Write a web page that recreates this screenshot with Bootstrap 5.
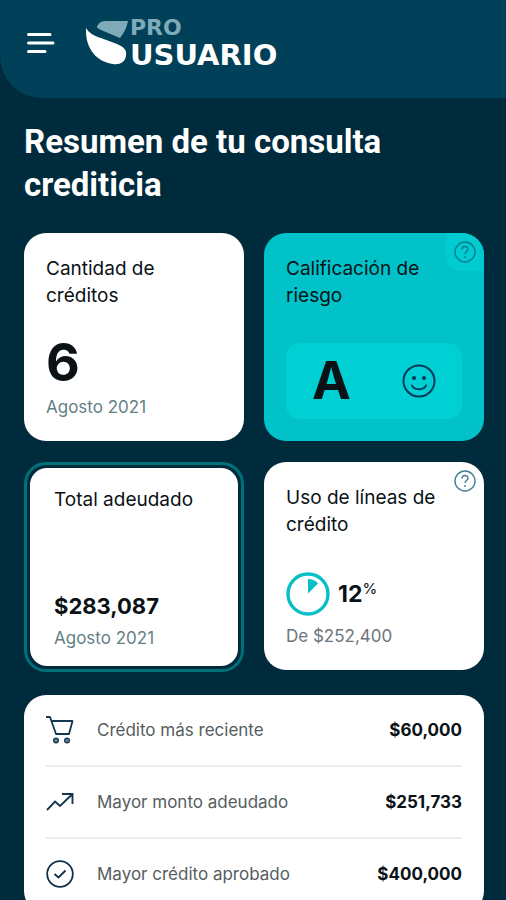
<!DOCTYPE html>
<html lang="es">
<head>
<meta charset="utf-8">
<meta name="viewport" content="width=device-width, initial-scale=1">
<title>Pro Usuario</title>
<link href="https://cdn.jsdelivr.net/npm/bootstrap@5.3.0/dist/css/bootstrap.min.css" rel="stylesheet">
<style>
:root{--navy:#002b3d;--bar:#004159;--teal:#00c2c8;--ink:#0b1216}
body{background:var(--navy);color:var(--ink);font-family:Inter,"Noto Sans",sans-serif}
svg{display:block;flex:none}
.topbar{background:var(--bar);min-height:98px;border-bottom-left-radius:42px;padding:0 26px 12px}
.brand-text{font:700 29px/30px "DejaVu Sans",sans-serif;color:#fff}
.brand-text .pro{font-size:22px;line-height:24px;color:#7eabb7}
.page-main{padding:22px 22px 0 24px}
.page-title{font:700 33px/43px Roboto,sans-serif;color:#fff;margin:0 0 27px}
.tiles{display:grid;grid-template-columns:1fr 1fr;align-items:start;gap:21px 20px}
.tile{background:#fff;border-radius:22px;min-height:208px;padding:22px;position:relative}
.tile h2{font-size:19px;line-height:27px;font-weight:400;margin:0}
.tile-risk{background:var(--teal)}
.tile-ring{min-height:210px;border:3px solid #007079;background:var(--navy);padding:3px}
.tile-ring>div{background:#fff;border-radius:17px;padding:18px 24px 16px}
.big{font-size:52px;line-height:48px;font-weight:700}
.note{font-size:17px;line-height:24px;color:#648085}
.amount{font-size:22px;line-height:32px;font-weight:700}
.pct{font-size:23px;line-height:28px;font-weight:700}
.pct sup{font-size:15px;font-weight:400;top:-8px}
.help{position:absolute;top:0;right:0;border:0;background:none;color:#437f91;padding:8px;border-radius:0 22px 0 14px}
.tile-risk .help{background:#00cbd0;color:#087c8b}
.grade{background:#00d0d4;border-radius:14px;height:76px;padding:0 26px}
.summary{background:#fff;border-radius:22px;padding:0 22px 4px;margin-top:23px}
.summary li{min-height:70px;font-size:17px;line-height:24px;color:#555d61}
.summary li+li{border-top:2px solid #ebeff0;min-height:72px}
.summary strong{color:var(--ink)}
.ico{gap:23px}
</style>
</head>
<body>
<header class="topbar d-flex align-items-center">
  <button class="btn p-0 border-0" type="button" aria-label="Menú">
    <svg width="30" height="24" fill="none" stroke="#fff" stroke-width="3" stroke-linecap="round"><path d="M2.500 3.500H24M2.500 12H27M2.500 20.500H19"/></svg>
  </button>
  <a class="d-flex align-items-center text-decoration-none ms-4 ps-1" href="#" aria-label="Pro Usuario">
    <svg width="46" height="46" viewBox="0 0 46 46"><path fill="#7eabb7" d="M14 5C16 1 20 1 24 1H44C43 7 40 13 36 18L17 10C13 8 12 7 14 5Z"/><path fill="#fff" d="M2 8C5 13 10 16 17 18L33 24C40 27 43 30 42 36C41 42 36 45 29 44C14 42 1 30 2 8Z"/></svg>
    <span class="brand-text d-flex flex-column"><span class="pro">PRO</span><span>USUARIO</span></span>
  </a>
</header>
<main class="page-main">
  <h1 class="page-title">Resumen de tu consulta crediticia</h1>
  <div class="tiles">
    <section class="tile d-flex flex-column">
      <h2>Cantidad de<br>créditos</h2>
      <div class="mt-auto big">6</div>
      <div class="note mt-2">Agosto 2021</div>
    </section>
    <section class="tile tile-risk d-flex flex-column">
      <button class="help" type="button" aria-label="Ayuda sobre calificación"><svg width="22" height="22" fill="none" stroke="currentColor" stroke-width="1.4"><circle cx="11" cy="11" r="10"/><path d="M8 8.500C8 4.500 14 4.500 14 8.200C14 10.500 11 10.500 11 13M11 15V17"/></svg></button>
      <h2>Calificación de<br>riesgo</h2>
      <div class="grade mt-auto d-flex align-items-center justify-content-between">
        <span class="big">A</span>
        <svg width="34" height="34" fill="none" stroke="#04395a" stroke-width="2" stroke-linecap="round"><circle cx="17" cy="17" r="15.500"/><path d="M10 21.500C12 26.500 22 26.500 24 21.500"/><g fill="#04395a" stroke="none"><circle cx="12" cy="14" r="2"/><circle cx="22" cy="14" r="2"/></g></svg>
      </div>
    </section>
    <section class="tile tile-ring d-flex">
      <div class="d-flex flex-column flex-fill">
        <h2>Total adeudado</h2>
        <div class="amount mt-auto mb-1">$283,087</div>
        <div class="note">Agosto 2021</div>
      </div>
    </section>
    <section class="tile d-flex flex-column">
      <button class="help" type="button" aria-label="Ayuda sobre líneas de crédito"><svg width="22" height="22" fill="none" stroke="currentColor" stroke-width="1.4"><circle cx="11" cy="11" r="10"/><path d="M8 8.500C8 4.500 14 4.500 14 8.200C14 10.500 11 10.500 11 13M11 15V17"/></svg></button>
      <h2>Uso de líneas de<br>crédito</h2>
      <div class="d-flex align-items-center mt-auto">
        <svg width="44" height="44"><circle cx="22" cy="22" r="20" fill="none" stroke="#08bfc5" stroke-width="3.400"/><path fill="#08bfc5" d="M22 21.500V7C26 7 29 8 32 11.500Z"/></svg>
        <div class="pct ms-2">12<sup>%</sup></div>
      </div>
      <div class="note mt-2 text-secondary">De $252,400</div>
    </section>
  </div>
  <ul class="summary list-unstyled mb-0">
    <li class="d-flex align-items-center ico">
      <svg width="28" height="30" fill="none" stroke="#12384f" stroke-width="1.800" stroke-linejoin="round"><path d="M0 2H4L10 19H23L26.500 6H5.500"/><g fill="#647f8e" stroke-width="1.200"><circle cx="10" cy="25.500" r="2.400"/><circle cx="21" cy="25.500" r="2.400"/></g></svg>
      <span class="flex-fill">Crédito más reciente</span><strong>$60,000</strong>
    </li>
    <li class="d-flex align-items-center ico">
      <svg width="28" height="20" fill="none" stroke="#12384f" stroke-width="1.900"><path d="M1 18L9 9.500L14 14L26 2.500M16 2H26.500V12"/></svg>
      <span class="flex-fill">Mayor monto adeudado</span><strong>$251,733</strong>
    </li>
    <li class="d-flex align-items-center ico">
      <svg width="28" height="28" fill="none" stroke="#102f4b" stroke-width="1.800"><circle cx="14" cy="14" r="12.800"/><path d="M8.500 14L12.500 17.500L19.500 10.500"/></svg>
      <span class="flex-fill">Mayor crédito aprobado</span><strong>$400,000</strong>
    </li>
  </ul>
</main>
<script src="https://cdn.jsdelivr.net/npm/bootstrap@5.3.0/dist/js/bootstrap.bundle.min.js"></script>
</body>
</html>
